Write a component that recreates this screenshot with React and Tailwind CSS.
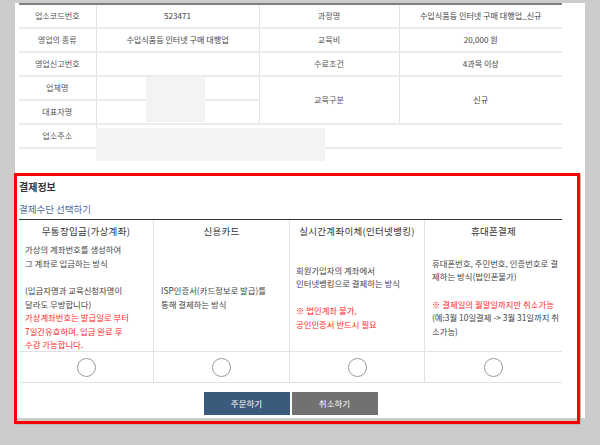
const info = [
  { label: '업소코드번호', value: '523471', label2: '과정명', value2: '수입식품등 인터넷 구매 대행업_신규' },
  { label: '영업의 종류', value: '수입식품등 인터넷 구매 대행업', label2: '교육비', value2: '20,000 원' },
  { label: '영업신고번호', value: '', label2: '수료조건', value2: '4과목 이상' },
];

const cellBorder = 'border-r border-[#e2e2e2]';

const Radio = () => (
  <span className="block w-[19px] h-[19px] rounded-full border border-[#9a9a9a] bg-white" />
);

export default function App() {
  return (
    <div className="w-[600px] h-[445px] overflow-hidden bg-[#cccccc] pt-[15px] pl-[15px] font-['Noto_Sans_CJK_KR',sans-serif]">
      <div className="w-[570px] h-[415px] bg-white px-[4px]">
        {/* 업소 / 과정 정보 */}
        <div className="relative -mt-[12px] w-[543px]">
          <table className="w-[543px] table-fixed border-t-2 border-t-[#808080] text-[8.1px] text-[#444]">
            <colgroup>
              <col className="w-[77px]" />
              <col className="w-[163px]" />
              <col className="w-[140px]" />
              <col className="w-[163px]" />
            </colgroup>
            <tbody>
              {info.map((row) => (
                <tr key={row.label} className="h-[24px] border-b-2 border-[#ececec]">
                  <td className={`text-center text-[#555] ${cellBorder}`}>{row.label}</td>
                  <td className={`text-center ${cellBorder}`}>{row.value}</td>
                  <td className={`text-center text-[#555] ${cellBorder}`}>{row.label2}</td>
                  <td className="text-center">{row.value2}</td>
                </tr>
              ))}
              <tr className="h-[24px] border-b-2 border-[#ececec]">
                <td className={`text-center text-[#555] ${cellBorder}`}>업체명</td>
                <td className={cellBorder}></td>
                <td rowSpan={2} className={`text-center text-[#555] ${cellBorder}`}>교육구분</td>
                <td rowSpan={2} className="text-center">신규</td>
              </tr>
              <tr className="h-[24px] border-b-2 border-[#ececec]">
                <td className={`text-center text-[#555] ${cellBorder}`}>대표자명</td>
                <td className={cellBorder}></td>
              </tr>
              <tr className="h-[24px] border-b-2 border-[#ececec]">
                <td className={`text-center text-[#555] ${cellBorder}`}>업소주소</td>
                <td colSpan={3}></td>
              </tr>
            </tbody>
          </table>
          {/* 가려진 정보 */}
          <div className="absolute left-[127px] top-[74px] w-[59px] h-[45px] bg-[#f3f3f3]" />
          <div className="absolute left-[77px] top-[125px] w-[229px] h-[33px] bg-[#f3f3f3]" />
        </div>

        {/* 결제정보 */}
        <div className="-ml-[5px] mt-[24px] w-[566px] border-[3px] border-[#ff0000] pl-[2px] pr-[15px] pb-[6px] shadow-[1px_1px_0_#bbbbbb]">
          <div className="mt-[4px] text-[10px] font-bold leading-[14px] text-[#333]">결제정보</div>
          <div className="mt-[8px] text-[9.5px] leading-[14px] text-[#4d6d9e]">결제수단 선택하기</div>

          <div className="mt-[3px] grid grid-cols-[134px_136px_135px_138px] grid-rows-[24px_108px_31px] border-t border-[#333] text-[8.4px] leading-[13.6px] text-[#444]">
            {/* 헤더 */}
            <div className="flex items-center justify-center text-[9.5px] tracking-[0.3px] text-[#333]">무통장입금(가상계좌)</div>
            <div className="flex items-center justify-center border-l border-[#e2e2e2] text-[9.5px] tracking-[0.3px] text-[#333]">신용카드</div>
            <div className="flex items-center justify-center border-l border-[#e2e2e2] text-[9.5px] tracking-[0.3px] text-[#333]">실시간계좌이체(인터넷뱅킹)</div>
            <div className="flex items-center justify-center border-l border-[#e2e2e2] text-[9.5px] tracking-[0.3px] text-[#333]">휴대폰결제</div>

            {/* 설명 */}
            <div className="flex flex-col justify-center px-[6px] whitespace-nowrap border-b border-[#e2e2e2]">
              <span>가상의 계좌번호를 생성하여</span>
              <span>그 계좌로 입금하는 방식</span>
              <span>&nbsp;</span>
              <span>(입금자명과 교육신청자명이</span>
              <span>달라도 무방합니다)</span>
              <span className="text-[#ff2a2a]">가상계좌번호는 발급일로 부터</span>
              <span className="text-[#ff2a2a]">7일간유효하며, 입금 완료 후</span>
              <span className="text-[#ff2a2a]">수강 가능합니다.</span>
            </div>
            <div className="flex flex-col justify-center px-[7px] whitespace-nowrap border-l border-b border-[#e2e2e2]">
              <span>ISP인증서(카드정보로 발급)를</span>
              <span>통해 결제하는 방식</span>
            </div>
            <div className="flex flex-col justify-center px-[6px] whitespace-nowrap border-l border-b border-[#e2e2e2]">
              <span>회원가입자의 계좌에서</span>
              <span>인터넷뱅킹으로 결제하는 방식</span>
              <span>&nbsp;</span>
              <span className="text-[#ff2a2a]">※ 법인계좌 불가,</span>
              <span className="text-[#ff2a2a]">공인인증서 반드시 필요</span>
            </div>
            <div className="flex flex-col justify-center px-[7px] whitespace-nowrap border-l border-b border-[#e2e2e2]">
              <span>휴대폰번호, 주민번호, 인증번호로 결</span>
              <span>제하는 방식(법인폰불가)</span>
              <span>&nbsp;</span>
              <span className="text-[#ff2a2a]">※ 결제일의 월말일까지만 취소가능</span>
              <span>(예:3월 10일결제 -&gt; 3월 31일까지 취</span>
              <span>소가능)</span>
            </div>

            {/* 선택 */}
            <div className="flex items-center justify-center border-b border-[#e2e2e2]"><Radio /></div>
            <div className="flex items-center justify-center border-l border-b border-[#e2e2e2]"><Radio /></div>
            <div className="flex items-center justify-center border-l border-b border-[#e2e2e2]"><Radio /></div>
            <div className="flex items-center justify-center border-l border-b border-[#e2e2e2]"><Radio /></div>
          </div>

          <div className="mt-[9px] flex justify-center gap-[2px]">
            <button type="button" className="w-[86px] h-[23px] bg-[#3b5b7d] text-white text-[8.5px]">주문하기</button>
            <button type="button" className="w-[86px] h-[23px] bg-[#717171] text-white text-[8.5px]">취소하기</button>
          </div>
        </div>
      </div>
    </div>
  );
}
